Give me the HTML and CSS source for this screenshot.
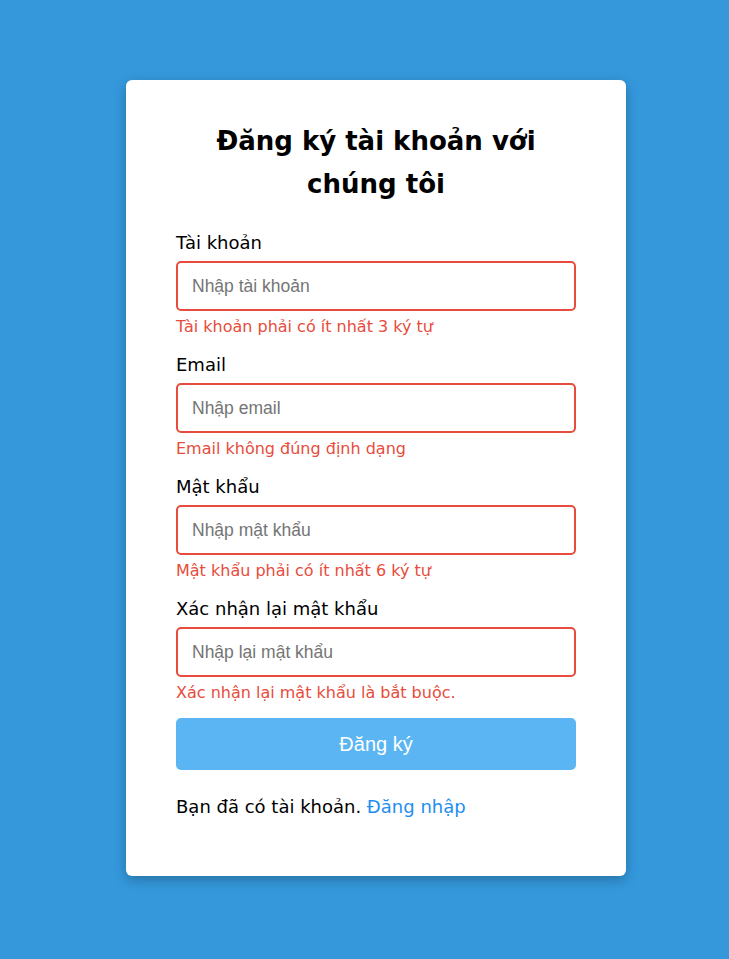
FILE: index.html
```html
<!DOCTYPE html>
<html lang="vi">
<head>
<meta charset="utf-8">
<title>Đăng ký</title>
<link rel="stylesheet" href="styles.css">
</head>
<body>
<div class="page">
  <div class="card">
    <h2 class="title">Đăng ký tài khoản với chúng tôi</h2>
    <form class="form">
      <div class="group">
        <label class="label">Tài khoản</label>
        <input class="input" type="text" placeholder="Nhập tài khoản">
        <div class="error">Tài khoản phải có ít nhất 3 ký tự</div>
      </div>
      <div class="group">
        <label class="label">Email</label>
        <input class="input" type="text" placeholder="Nhập email">
        <div class="error">Email không đúng định dạng</div>
      </div>
      <div class="group">
        <label class="label">Mật khẩu</label>
        <input class="input" type="password" placeholder="Nhập mật khẩu">
        <div class="error">Mật khẩu phải có ít nhất 6 ký tự</div>
      </div>
      <div class="group">
        <label class="label">Xác nhận lại mật khẩu</label>
        <input class="input" type="password" placeholder="Nhập lại mật khẩu">
        <div class="error">Xác nhận lại mật khẩu là bắt buộc.</div>
      </div>
      <button class="btn" type="button">Đăng ký</button>
    </form>
    <p class="footer">Bạn đã có tài khoản. <a class="link" href="#">Đăng nhập</a></p>
  </div>
</div>
</body>
</html>
```
FILE: styles.css
```css
html, body {
  margin: 0;
  padding: 0;
}
body {
  background: #3498db;
  font-family: "DejaVu Sans", sans-serif;
  color: #000;
}
.page {
  display: flex;
  justify-content: flex-start;
  padding: 80px 0 0 126px;
  min-height: 959px;
  box-sizing: border-box;
}
.card {
  width: 500px;
  box-sizing: border-box;
  background: #fff;
  border-radius: 6px;
  box-shadow: 0 4px 12px rgba(0, 0, 0, 0.25);
  padding: 40px 50px 35px;
  height: 796px;
}
.title {
  margin: 0 0 24px;
  text-align: center;
  font-size: 26px;
  line-height: 43px;
  font-weight: bold;
}
.form {
  display: flex;
  flex-direction: column;
}
.group {
  display: flex;
  flex-direction: column;
  margin-bottom: 13px;
}
.label {
  font-size: 18px;
  line-height: 26px;
  margin-bottom: 5px;
}
.input {
  height: 50px;
  box-sizing: border-box;
  border: 2px solid #e74c3c;
  border-radius: 5px;
  padding: 0 14px;
  font-family: "Liberation Sans", Arial, sans-serif;
  font-size: 17.5px;
  outline: none;
}
.input::placeholder {
  color: #757575;
}
.error {
  margin-top: 4px;
  color: #e74c3c;
  font-size: 16px;
  line-height: 24px;
}
.btn {
  height: 52px;
  border: none;
  border-radius: 5px;
  background: #5ab5f2;
  color: #fff;
  font-family: "Liberation Sans", Arial, sans-serif;
  font-size: 20px;
}
.footer {
  margin: 24px 0 0;
  font-size: 18px;
  line-height: 26px;
}
.link {
  color: #1e8ef0;
  text-decoration: none;
}
```
